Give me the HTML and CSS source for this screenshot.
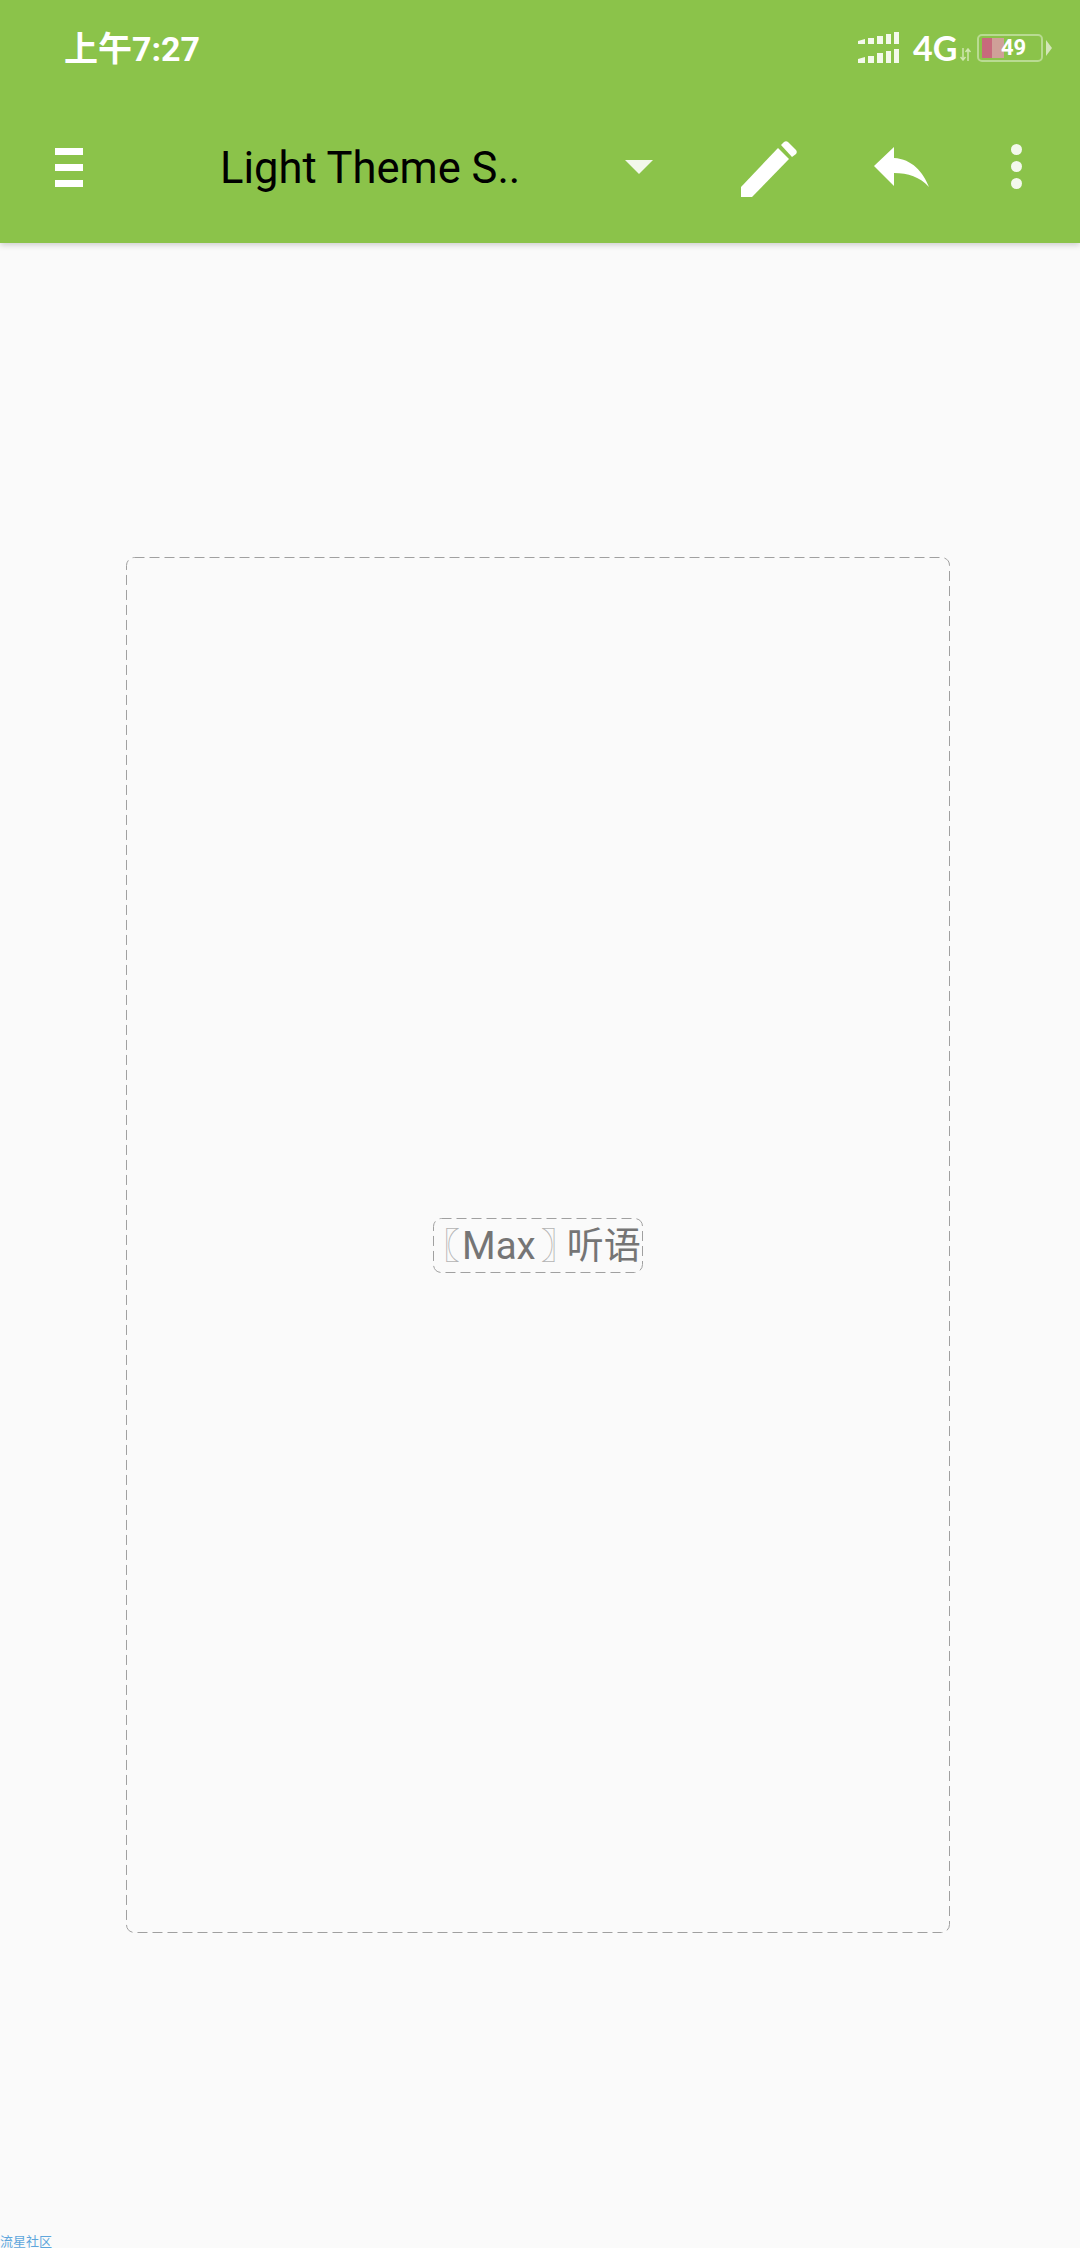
FILE: index.html
```html
<!DOCTYPE html>
<html>
<head lang="en">
    <meta charset="UTF-8">
    <title>Light Theme</title>
    <link rel="stylesheet" href="styles.css">
</head>
<body>
<div id="page">
    <div id="header">
        <div id="status">
            <span class="time">上午7:27</span>
            <div class="status-right">
                <svg class="signal" width="41" height="32" viewBox="0 0 41 32" fill="#f4f9ec">
                    <path d="M0 9l7-2v5h-7zM10 6h6v6h-6zM19 4h6v8h-6zM28 2h5v10h-5zM36 0h5v12h-5z"/>
                    <path d="M0 27l7-2v6h-7zM10 24h6v7h-6zM19 21h6v10h-6zM28 19h5v12h-5zM36 17h5v14h-5z"/>
                </svg>
                <span class="net">4G</span>
                <svg class="arrows" width="11" height="13" viewBox="0 0 11 13" fill="none" stroke="#cfe6ae" stroke-width="1.500">
                    <path d="M3 0v12M0.500 9l2.500 3 2.500-3M8 13v-12M5.500 4l2.500-3 2.500 3"/>
                </svg>
                <div class="battery">
                    <span class="level-red"></span><span class="level-pale"></span><span class="level-num">49</span>
                </div>
                <span class="nub"></span>
            </div>
        </div>
        <div id="toolbar">
            <div class="menu"><span></span><span></span><span></span></div>
            <span class="title">Light Theme S..</span>
            <span class="caret"></span>
            <svg class="pencil" width="56" height="56" viewBox="0 0 56 56" fill="#fff">
                <path d="M0 46L37 7L48 18L11 56H0Z"/>
                <path d="M40 4L43 1Q45 -0.500 47 1L55 9Q56.500 11 55 13L51 16Z"/>
            </svg>
            <svg class="reply" width="55" height="40" viewBox="0 0 55 40" fill="#fff">
                <path d="M0 19L20 0V11C38 12 49 25 55 40C46 30 34 26 20 26V39Z"/>
            </svg>
            <div class="dots"><span></span><span></span><span></span></div>
        </div>
    </div>
    <div id="main">
        <div class="canvas">
            <svg class="dash" width="824" height="1376">
                <rect x="0.500" y="0.500" width="823" height="1375" rx="8" fill="none" stroke="#a0a0a0" stroke-width="1" stroke-dasharray="10 5"/>
            </svg>
            <div class="word">
                <svg class="dash" width="210" height="55">
                    <rect x="0.500" y="0.500" width="209" height="54" rx="8" fill="none" stroke="#a0a0a0" stroke-width="1" stroke-dasharray="10 5"/>
                </svg>
                <span class="bracket open">〖</span><span class="latin">Max</span><span class="bracket close">〗</span>听语
            </div>
        </div>
    </div>
    <div id="mark">流星社区</div>
</div>
</body>
</html>
```

FILE: styles.css
```css
*{
    margin: 0;
    padding: 0;
    box-sizing: border-box;
}
html,body{
    background: #fafafa;
}
#page{
    position: relative;
    width: 1080px;
    height: 2248px;
    overflow: hidden;
    font-family: Roboto, "Noto Sans CJK SC", sans-serif;
}
#header{
    height: 243px;
    background: #8bc34a;
    box-shadow: 0 2px 6px rgba(0,0,0,.18);
}
#status{
    height: 95px;
    display: flex;
    align-items: center;
    justify-content: space-between;
    padding: 0 28px 0 64px;
    color: #fff;
}
.time{
    font-size: 34px;
    font-weight: 700;
    margin-top: -3px;
}
.status-right{
    display: flex;
    align-items: center;
}
.signal{
    margin-right: 14px;
}
.net{
    font-family: Lato, sans-serif;
    font-size: 34px;
    font-weight: 700;
    line-height: 34px;
    width: 47px;
}
.arrows{
    margin: 13px 6px 0 0;
}
.battery{
    display: flex;
    align-items: center;
    width: 66px;
    height: 28px;
    padding: 3px;
    border: 2px solid #b9db92;
    border-radius: 5px;
}
.level-red{
    width: 10px;
    height: 20px;
    background: #c76a7c;
}
.level-pale{
    width: 12px;
    height: 20px;
    background: #cfa098;
}
.level-num{
    font-size: 22px;
    font-weight: 700;
    line-height: 20px;
    margin-left: -3px;
}
.nub{
    width: 0;
    height: 0;
    margin-left: 3px;
    border-left: 6px solid #d3e6b8;
    border-top: 8px solid transparent;
    border-bottom: 8px solid transparent;
}
#toolbar{
    height: 148px;
    display: flex;
    align-items: center;
    padding-left: 55px;
}
.menu{
    width: 28px;
    margin-top: -4px;
    display: flex;
    flex-direction: column;
    gap: 9px;
}
.menu span{
    height: 7px;
    background: #fff;
}
.title{
    width: 361px;
    margin-left: 137px;
    margin-top: -2px;
    font-size: 43.500px;
    color: #000;
    white-space: nowrap;
}
.caret{
    width: 0;
    height: 0;
    margin-left: 44px;
    margin-top: -4px;
    border-top: 14px solid #f3f8ec;
    border-left: 14px solid transparent;
    border-right: 14px solid transparent;
}
.pencil{
    margin-left: 88px;
    margin-top: -1px;
}
.reply{
    margin-left: 77px;
    margin-top: -5px;
}
.dots{
    margin-left: 82px;
    margin-top: -5px;
    display: flex;
    flex-direction: column;
    gap: 6px;
}
.dots span{
    width: 11px;
    height: 11px;
    border-radius: 50%;
    background: #f3f8ec;
}
#main{
    padding: 314px 0 0 126px;
}
.canvas{
    position: relative;
    width: 824px;
    height: 1376px;
    display: flex;
    align-items: center;
    justify-content: center;
}
.dash{
    position: absolute;
    left: 0;
    top: 0;
}
.word{
    position: relative;
    width: 210px;
    height: 55px;
    line-height: 55px;
    font-size: 37px;
    color: #757575;
    white-space: nowrap;
}
.latin{
    font-size: 38.500px;
}
.bracket{
    font-size: 36px;
    color: #b4b4b4;
    font-weight: 300;
}
.open{
    margin-left: -9px;
    letter-spacing: 2px;
}
.close{
    margin-left: 5px;
    letter-spacing: -10px;
}
#mark{
    position: absolute;
    left: 0;
    bottom: 0;
    font-size: 13px;
    line-height: 13px;
    color: #5ea6dc;
}
```
